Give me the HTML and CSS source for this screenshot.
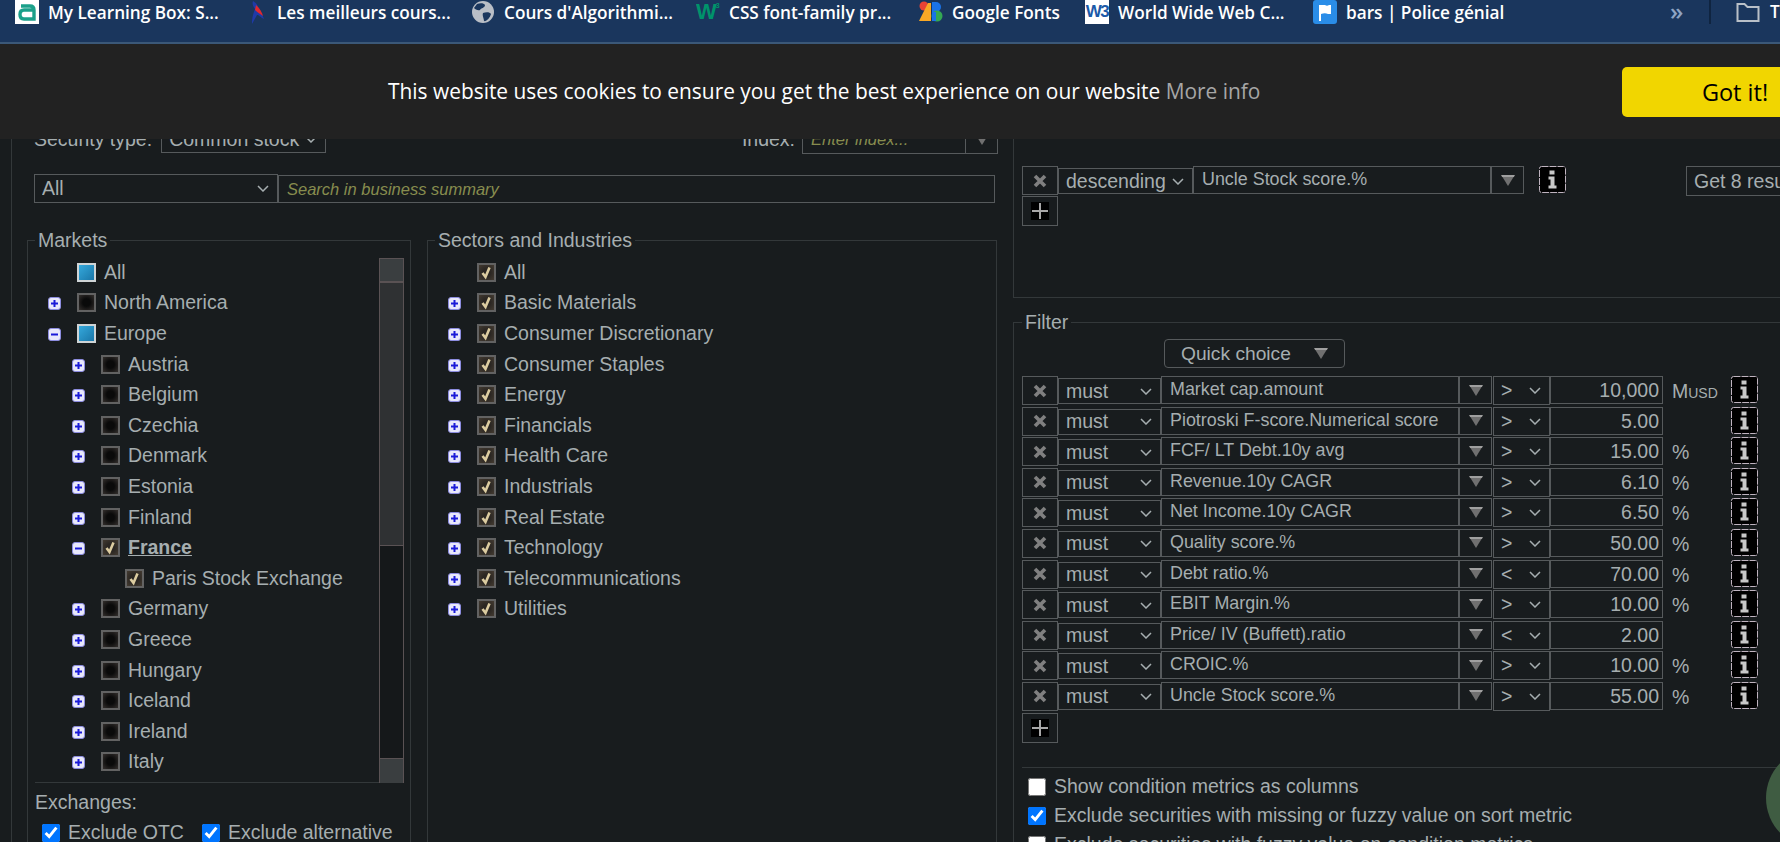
FILE: index.html
```html
<!DOCTYPE html>
<html lang="en">
<head>
<meta charset="utf-8">
<title>Uncle Stock screener</title>
<link rel="stylesheet" href="styles.css">
</head>
<body>
<svg class="sprite" aria-hidden="true">
  <symbol id="tick" viewBox="0 0 19 19"><path d="M5.500 10 L8.500 14 L12.500 4.500" fill="none" stroke="#dccca0" stroke-width="2.600"/></symbol>
  <symbol id="plus" viewBox="0 0 13 13"><rect x=".5" y=".5" width="12" height="12" rx="2.500" fill="#e8e8fb" stroke="#8c8ce0"/><path d="M3 6.500h7M6.500 3v7" stroke="#1a1ad8" stroke-width="2"/></symbol>
  <symbol id="minus" viewBox="0 0 13 13"><rect x=".5" y=".5" width="12" height="12" rx="2.500" fill="#e8e8fb" stroke="#8c8ce0"/><path d="M3 6.500h7" stroke="#1a1ad8" stroke-width="2"/></symbol>
  <symbol id="cross" viewBox="0 0 14 14"><path d="M2 2 L12 12 M12 2 L2 12" stroke="#808080" stroke-width="3.600"/></symbol>
  <symbol id="add" viewBox="0 0 18 18"><rect width="18" height="18" fill="#000"/><path d="M1 9h16M9 1v16" stroke="#a8a8a8" stroke-width="2"/></symbol>
  <symbol id="tri" viewBox="0 0 16 13"><path d="M0 0H16L8 13Z" fill="#707070"/><path d="M0 0H16L15 2.500H1Z" fill="#a0a0a0"/></symbol>
  <symbol id="info" viewBox="0 0 27 27"><rect x=".5" y=".5" width="26" height="26" rx="2" fill="#000" stroke="#bfb3bf" stroke-dasharray="7 1"/><path d="M10.500 4.500h5v4h-5zM9.500 10.500h6v9h2v3h-8v-3h2v-6h-2z" fill="#c8c8c8"/></symbol>
</svg>

<header class="bookmarks">
  <a class="bm bm-1"><svg class="bm-ico" viewBox="0 0 24 24"><rect width="24" height="24" fill="#fff"/><path d="M6 6h9q4 0 4 4v9H9q-4 0-4-4.500T9 10h10M5 14" fill="none" stroke="#1ba08a" stroke-width="3.400"/></svg><span>My Learning Box: S...</span></a>
  <a class="bm bm-2"><svg class="bm-ico" viewBox="0 0 24 24"><path d="M9 1 C14 4 15 8 15 11 C18 14 19 16 20 19 C16 17 15 15 13 15 L8 24 C8 16 10 12 11 9 C9 6 8 4 9 1Z" fill="#1f3aa8"/><path d="M12 5 C16 9 18 12 19 16 C16 14 13 12 11 10Z" fill="#e0282e"/></svg><span>Les meilleurs cours...</span></a>
  <a class="bm bm-3"><svg class="bm-ico" viewBox="0 0 24 24"><circle cx="12" cy="12" r="11" fill="#b9bec6"/><path d="M6 4 C9 3 13 3 14 5 C14 8 10 8 9 10 C7 11 4 9 3 8Z M12 13 C15 12 19 12 20 14 C19 18 15 22 13 21 C13 18 11 16 12 13Z" fill="#1a365d"/></svg><span>Cours d'Algorithmi...</span></a>
  <a class="bm bm-4"><span class="w3g">W<sup>3</sup></span><span>CSS font-family pr...</span></a>
  <a class="bm bm-5"><svg class="bm-ico" viewBox="0 0 24 24"><circle cx="5" cy="6" r="4.500" fill="#ea4335"/><path d="M0 21 L9 3 L12 3 V21Z" fill="#f9a825"/><path d="M13 2h4a5 5 0 0 1 0 10h-4z" fill="#1a73e8"/><circle cx="18" cy="16" r="5.500" fill="#34a853"/><path d="M13 12h4v9h-4z" fill="#1a73e8"/></svg><span>Google Fonts</span></a>
  <a class="bm bm-6"><span class="w3b">W3</span><span>World Wide Web C...</span></a>
  <a class="bm bm-7"><svg class="bm-ico" viewBox="0 0 24 24"><rect width="24" height="24" rx="3" fill="#2a8de8"/><path d="M7 5v16" stroke="#fff" stroke-width="2"/><path d="M8 5h4q2 1.500 4 0h2v9h-3q-3-1.500-7 0z" fill="#fff"/></svg><span>bars | Police génial</span></a>
  <span class="bm-more">»</span>
  <span class="bm-sep"></span>
  <svg class="bm-folder" viewBox="0 0 24 24"><path d="M1.500 21V4h7l3 3h11v14z" fill="none" stroke="#b9c0c8" stroke-width="2"/></svg>
  <span class="bm-t">T</span>
</header>

<div class="cookie">
  <p class="cookie-msg">This website uses cookies to ensure you get the best experience on our website <a class="cookie-more">More info</a></p>
  <button class="cookie-btn">Got it!</button>
</div>

<main class="main">
  <section class="left">
    <div class="sec-row">
      <div class="sec-group sec-type"><label>Security type:</label><select class="sel sel-sec"><option>Common stock</option></select></div>
      <div class="sec-group"><label>Index:</label><input class="inp inp-index" placeholder="Enter index..."><span class="dd dd-index"><svg class="tri"><use href="#tri"/></svg></span></div>
    </div>
    <div class="search-row">
      <select class="sel sel-all"><option>All</option></select>
      <input class="inp inp-search" placeholder="Search in business summary">
    </div>
    <div class="columns">
      <fieldset class="fs fs-markets">
        <legend>Markets</legend>
        <div class="tree-box">
          <ul class="tree">
            <li class="row l1"><span class="noexp"></span><span class="cb tri-state"></span><span>All</span></li>
            <li class="row l1"><svg class="exp"><use href="#plus"/></svg><span class="cb"></span><span>North America</span></li>
            <li class="row l1"><svg class="exp"><use href="#minus"/></svg><span class="cb tri-state"></span><span>Europe</span></li>
            <li class="row l2"><svg class="exp"><use href="#plus"/></svg><span class="cb"></span><span>Austria</span></li>
            <li class="row l2"><svg class="exp"><use href="#plus"/></svg><span class="cb"></span><span>Belgium</span></li>
            <li class="row l2"><svg class="exp"><use href="#plus"/></svg><span class="cb"></span><span>Czechia</span></li>
            <li class="row l2"><svg class="exp"><use href="#plus"/></svg><span class="cb"></span><span>Denmark</span></li>
            <li class="row l2"><svg class="exp"><use href="#plus"/></svg><span class="cb"></span><span>Estonia</span></li>
            <li class="row l2"><svg class="exp"><use href="#plus"/></svg><span class="cb"></span><span>Finland</span></li>
            <li class="row l2"><svg class="exp"><use href="#minus"/></svg><span class="cb cb-on"><svg class="tick"><use href="#tick"/></svg></span><span class="current">France</span></li>
            <li class="row l3"><span class="cb cb-on"><svg class="tick"><use href="#tick"/></svg></span><span>Paris Stock Exchange</span></li>
            <li class="row l2"><svg class="exp"><use href="#plus"/></svg><span class="cb"></span><span>Germany</span></li>
            <li class="row l2"><svg class="exp"><use href="#plus"/></svg><span class="cb"></span><span>Greece</span></li>
            <li class="row l2"><svg class="exp"><use href="#plus"/></svg><span class="cb"></span><span>Hungary</span></li>
            <li class="row l2"><svg class="exp"><use href="#plus"/></svg><span class="cb"></span><span>Iceland</span></li>
            <li class="row l2"><svg class="exp"><use href="#plus"/></svg><span class="cb"></span><span>Ireland</span></li>
            <li class="row l2"><svg class="exp"><use href="#plus"/></svg><span class="cb"></span><span>Italy</span></li>
          </ul>
          <div class="scrollbar"><span class="sb-btn"></span><span class="sb-thumb"></span><span class="sb-track"></span><span class="sb-btn sb-end"></span></div>
        </div>
        <div class="exch-title">Exchanges:</div>
        <div class="exch-row">
          <label class="chk"><input type="checkbox" checked>Exclude OTC</label>
          <label class="chk"><input type="checkbox" checked>Exclude alternative</label>
        </div>
      </fieldset>
      <fieldset class="fs fs-sectors">
        <legend>Sectors and Industries</legend>
        <ul class="tree">
          <li class="row l1"><span class="noexp"></span><span class="cb cb-on"><svg class="tick"><use href="#tick"/></svg></span><span>All</span></li>
          <li class="row l1"><svg class="exp"><use href="#plus"/></svg><span class="cb cb-on"><svg class="tick"><use href="#tick"/></svg></span><span>Basic Materials</span></li>
          <li class="row l1"><svg class="exp"><use href="#plus"/></svg><span class="cb cb-on"><svg class="tick"><use href="#tick"/></svg></span><span>Consumer Discretionary</span></li>
          <li class="row l1"><svg class="exp"><use href="#plus"/></svg><span class="cb cb-on"><svg class="tick"><use href="#tick"/></svg></span><span>Consumer Staples</span></li>
          <li class="row l1"><svg class="exp"><use href="#plus"/></svg><span class="cb cb-on"><svg class="tick"><use href="#tick"/></svg></span><span>Energy</span></li>
          <li class="row l1"><svg class="exp"><use href="#plus"/></svg><span class="cb cb-on"><svg class="tick"><use href="#tick"/></svg></span><span>Financials</span></li>
          <li class="row l1"><svg class="exp"><use href="#plus"/></svg><span class="cb cb-on"><svg class="tick"><use href="#tick"/></svg></span><span>Health Care</span></li>
          <li class="row l1"><svg class="exp"><use href="#plus"/></svg><span class="cb cb-on"><svg class="tick"><use href="#tick"/></svg></span><span>Industrials</span></li>
          <li class="row l1"><svg class="exp"><use href="#plus"/></svg><span class="cb cb-on"><svg class="tick"><use href="#tick"/></svg></span><span>Real Estate</span></li>
          <li class="row l1"><svg class="exp"><use href="#plus"/></svg><span class="cb cb-on"><svg class="tick"><use href="#tick"/></svg></span><span>Technology</span></li>
          <li class="row l1"><svg class="exp"><use href="#plus"/></svg><span class="cb cb-on"><svg class="tick"><use href="#tick"/></svg></span><span>Telecommunications</span></li>
          <li class="row l1"><svg class="exp"><use href="#plus"/></svg><span class="cb cb-on"><svg class="tick"><use href="#tick"/></svg></span><span>Utilities</span></li>
        </ul>
      </fieldset>
    </div>
  </section>

  <section class="right">
    <fieldset class="fs fs-sort">
      <div class="sort-row">
        <button class="btn-x"><svg class="x"><use href="#cross"/></svg></button>
        <select class="sel sel-desc"><option>descending</option></select>
        <div class="metric metric-sort">Uncle Stock score.%</div>
        <span class="dd"><svg class="tri"><use href="#tri"/></svg></span>
        <svg class="info info-sort"><use href="#info"/></svg>
        <button class="get">Get 8 results</button>
      </div>
      <button class="btn-x btn-add"><svg class="plus"><use href="#add"/></svg></button>
    </fieldset>
    <fieldset class="fs fs-filter">
      <legend>Filter</legend>
      <button class="quick">Quick choice<svg class="tri"><use href="#tri"/></svg></button>
      <div class="rows">
        <div class="frow"><button class="btn-x"><svg class="x"><use href="#cross"/></svg></button><select class="sel sel-must"><option>must</option></select><div class="metric">Market cap.amount</div><span class="dd"><svg class="tri"><use href="#tri"/></svg></span><select class="sel sel-cmp"><option>&gt;</option></select><div class="val">10,000</div><div class="unit">M<small>USD</small></div><svg class="info"><use href="#info"/></svg></div>
        <div class="frow"><button class="btn-x"><svg class="x"><use href="#cross"/></svg></button><select class="sel sel-must"><option>must</option></select><div class="metric">Piotroski F-score.Numerical score</div><span class="dd"><svg class="tri"><use href="#tri"/></svg></span><select class="sel sel-cmp"><option>&gt;</option></select><div class="val">5.00</div><div class="unit"></div><svg class="info"><use href="#info"/></svg></div>
        <div class="frow"><button class="btn-x"><svg class="x"><use href="#cross"/></svg></button><select class="sel sel-must"><option>must</option></select><div class="metric">FCF/ LT Debt.10y avg</div><span class="dd"><svg class="tri"><use href="#tri"/></svg></span><select class="sel sel-cmp"><option>&gt;</option></select><div class="val">15.00</div><div class="unit">%</div><svg class="info"><use href="#info"/></svg></div>
        <div class="frow"><button class="btn-x"><svg class="x"><use href="#cross"/></svg></button><select class="sel sel-must"><option>must</option></select><div class="metric">Revenue.10y CAGR</div><span class="dd"><svg class="tri"><use href="#tri"/></svg></span><select class="sel sel-cmp"><option>&gt;</option></select><div class="val">6.10</div><div class="unit">%</div><svg class="info"><use href="#info"/></svg></div>
        <div class="frow"><button class="btn-x"><svg class="x"><use href="#cross"/></svg></button><select class="sel sel-must"><option>must</option></select><div class="metric">Net Income.10y CAGR</div><span class="dd"><svg class="tri"><use href="#tri"/></svg></span><select class="sel sel-cmp"><option>&gt;</option></select><div class="val">6.50</div><div class="unit">%</div><svg class="info"><use href="#info"/></svg></div>
        <div class="frow"><button class="btn-x"><svg class="x"><use href="#cross"/></svg></button><select class="sel sel-must"><option>must</option></select><div class="metric">Quality score.%</div><span class="dd"><svg class="tri"><use href="#tri"/></svg></span><select class="sel sel-cmp"><option>&gt;</option></select><div class="val">50.00</div><div class="unit">%</div><svg class="info"><use href="#info"/></svg></div>
        <div class="frow"><button class="btn-x"><svg class="x"><use href="#cross"/></svg></button><select class="sel sel-must"><option>must</option></select><div class="metric">Debt ratio.%</div><span class="dd"><svg class="tri"><use href="#tri"/></svg></span><select class="sel sel-cmp"><option>&lt;</option></select><div class="val">70.00</div><div class="unit">%</div><svg class="info"><use href="#info"/></svg></div>
        <div class="frow"><button class="btn-x"><svg class="x"><use href="#cross"/></svg></button><select class="sel sel-must"><option>must</option></select><div class="metric">EBIT Margin.%</div><span class="dd"><svg class="tri"><use href="#tri"/></svg></span><select class="sel sel-cmp"><option>&gt;</option></select><div class="val">10.00</div><div class="unit">%</div><svg class="info"><use href="#info"/></svg></div>
        <div class="frow"><button class="btn-x"><svg class="x"><use href="#cross"/></svg></button><select class="sel sel-must"><option>must</option></select><div class="metric">Price/ IV (Buffett).ratio</div><span class="dd"><svg class="tri"><use href="#tri"/></svg></span><select class="sel sel-cmp"><option>&lt;</option></select><div class="val">2.00</div><div class="unit"></div><svg class="info"><use href="#info"/></svg></div>
        <div class="frow"><button class="btn-x"><svg class="x"><use href="#cross"/></svg></button><select class="sel sel-must"><option>must</option></select><div class="metric">CROIC.%</div><span class="dd"><svg class="tri"><use href="#tri"/></svg></span><select class="sel sel-cmp"><option>&gt;</option></select><div class="val">10.00</div><div class="unit">%</div><svg class="info"><use href="#info"/></svg></div>
        <div class="frow"><button class="btn-x"><svg class="x"><use href="#cross"/></svg></button><select class="sel sel-must"><option>must</option></select><div class="metric">Uncle Stock score.%</div><span class="dd"><svg class="tri"><use href="#tri"/></svg></span><select class="sel sel-cmp"><option>&gt;</option></select><div class="val">55.00</div><div class="unit">%</div><svg class="info"><use href="#info"/></svg></div>
      </div>
      <button class="btn-x btn-add"><svg class="plus"><use href="#add"/></svg></button>
      <hr class="sep">
      <label class="chk opt opt-first"><input type="checkbox">Show condition metrics as columns</label>
      <label class="chk opt"><input type="checkbox" checked>Exclude securities with missing or fuzzy value on sort metric</label>
      <label class="chk opt"><input type="checkbox">Exclude securities with fuzzy value on condition metrics</label>
    </fieldset>
  </section>
</main>
<div class="bubble"></div>
</body>
</html>
```

FILE: styles.css
```css
* { box-sizing: border-box; }
html, body { height: 100%; margin: 0; overflow: hidden; }
body {
  position: relative;
  background: #181c1e;
  color: #a6aeb0;
  font-family: "Liberation Sans", Arial, sans-serif;
  font-size: 19.5px;
}
.sprite { position: absolute; width: 0; height: 0; }
ul { list-style: none; margin: 0; padding: 0; }
button { font-family: inherit; }

/* bookmarks bar */
.bookmarks {
  display: flex;
  align-items: flex-start;
  height: 44px;
  padding: 0 0 0 15px;
  background: #1a365d;
  border-bottom: 2px solid #3b5878;
  color: #fff;
  font-family: "Open Sans", sans-serif;
  font-size: 17.2px;
  font-weight: 600;
  white-space: nowrap;
}
.bm { display: flex; align-items: center; gap: 9px; height: 24px; }
.bm-ico { display: block; width: 24px; height: 24px; flex: none; }
.bm-1 { width: 229px; }
.bm-2 { width: 227px; }
.bm-3 { width: 225px; }
.bm-4 { width: 223px; }
.bm-5 { width: 166px; }
.bm-6 { width: 228px; }
.bm-7 { width: 355px; }
.w3g { width: 24px; color: #00936b; font: 700 22px/24px "Liberation Sans", sans-serif; letter-spacing: -1px; flex: none; white-space: nowrap; overflow: hidden; }
.w3g sup { font-size: 7px; line-height: 0; vertical-align: 11px; }
.w3b { width: 24px; height: 24px; background: #fff; color: #1c5aa8; font: 700 17px/24px "Liberation Sans", sans-serif; text-align: center; letter-spacing: -1.5px; flex: none; }
.bm-more { width: 41px; padding-left: 2px; color: #8ea4c4; font-size: 24px; line-height: 22px; }
.bm-sep { width: 2px; height: 24px; background: #0f2440; }
.bm-folder { width: 24px; height: 24px; margin-left: 25px; }
.bm-t { margin-left: 10px; line-height: 24px; }

/* cookie banner */
.cookie {
  position: absolute;
  top: 44px;
  left: 0;
  right: 0;
  z-index: 5;
  display: flex;
  align-items: center;
  justify-content: space-between;
  height: 95px;
  padding-left: 388px;
  overflow: hidden;
  background: #222;
  font-family: "Open Sans", sans-serif;
  font-size: 20.9px;
  color: #fff;
}
.cookie-msg { margin: 0 0 2px; }
.cookie-more { color: #a6a6a6; }
.cookie-btn {
  flex: none;
  width: 226px;
  height: 50px;
  margin-right: -68px;
  border: 0;
  border-radius: 5px;
  background: #f1d600;
  color: #000;
  font-family: "Open Sans", sans-serif;
  font-size: 23.5px;
}

/* main layout */
.main { display: flex; align-items: flex-start; }
.left {
  flex: none;
  width: 1002px;
  height: 798px;
  margin-left: 11px;
  padding: 81px 15px 0 22px;
  border-left: 1px solid #33383a;
}
.right { flex: none; width: 800px; padding-top: 64px; }

.sec-row { display: flex; justify-content: space-between; height: 28px; }
.sec-group { display: flex; align-items: center; gap: 7px; }
.sec-type { gap: 9px; }
.sel {
  appearance: none;
  height: 26px;
  padding: 0 0 1px 7px;
  border: 1px solid #565a5c;
  border-radius: 0;
  background: transparent url("data:image/svg+xml,%3Csvg xmlns='http://www.w3.org/2000/svg' width='12' height='7'%3E%3Cpath d='M1 1l5 5 5-5' fill='none' stroke='%23a6aeb0' stroke-width='1.500'/%3E%3C/svg%3E") no-repeat right 8px center;
  color: #a6aeb0;
  font-family: "Liberation Sans", sans-serif;
  font-size: 19.5px;
}
.inp {
  height: 29px;
  padding: 0 8px;
  border: 1px solid #565a5c;
  background: transparent;
  color: #a6aeb0;
  font-family: "Liberation Sans", sans-serif;
  font-size: 16.5px;
  font-style: italic;
}
.inp::placeholder { color: #878c4e; opacity: 1; }
.sel-sec { width: 165px; height: 28px; }
.inp-index { width: 163px; border-right: 0; }
.dd {
  display: flex;
  align-items: center;
  justify-content: center;
  flex: none;
  width: 33px;
  height: 28px;
  border: 1px solid #565a5c;
}
.dd-index { height: 29px; margin-left: -7px; }
.tri { display: block; width: 14px; height: 11px; }

.search-row { display: flex; align-items: flex-start; height: 29px; margin-top: 21px; }
.sel-all { width: 244px; height: 29px; }
.inp-search { width: 717px; height: 28px; margin-top: 1px; }

.columns { display: flex; gap: 16px; margin: 26px 0 0 -7px; }
.fs {
  margin: 0;
  padding: 6px 7px 0;
  border: 1px solid #33383a;
  min-width: 0;
}
.fs legend { padding: 0 3px; line-height: 22px; }
.fs-markets { flex: none; width: 384px; height: 700px; padding-right: 6px; }
.fs-sectors { flex: none; width: 570px; height: 700px; }

.tree-box { display: flex; height: 526px; border-bottom: 1px solid #33383a; }
.tree { flex: 1; }
.row { display: flex; align-items: center; height: 30.6px; white-space: nowrap; }
.l1 { padding-left: 13px; }
.l2 { padding-left: 37px; }
.l3 { padding-left: 90px; }
.exp { display: block; flex: none; width: 13px; height: 13px; margin-top: 2px; margin-right: 16px; }
.noexp { flex: none; width: 29px; }
.cb {
  position: relative;
  flex: none;
  width: 19px;
  height: 19px;
  margin-right: 8px;
  border: 2px solid #626262;
  background: radial-gradient(circle, #0a0a0a 35%, #2e2a28 90%);
}
.cb-on { background: radial-gradient(circle, #2a2622 35%, #40382f 90%); }
.tri-state {
  border: 2px solid #cfd4d6;
  background: linear-gradient(135deg, #35a9dc, #1a76a8);
}
.tick { position: absolute; inset: -2px; width: 19px; height: 19px; }
.current { font-weight: 700; text-decoration: underline; }

.scrollbar { display: flex; flex-direction: column; flex: none; width: 25px; height: 525px; margin-top: 1px; border: 1px solid #5a5254; border-width: 0 1px; }
.sb-btn { flex: none; height: 25px; background: #3a3e40; border-top: 1px solid #5a5254; border-bottom: 2px solid #5a5254; }
.sb-thumb { flex: none; height: 262px; background: #2f3133; }
.sb-track { flex: 1; background: #15181a; border-top: 1px solid #5a5254; }
.sb-end { border-bottom: 0; border-top: 1px solid #5a5254; }

.exch-title { margin-top: 8px; line-height: 22px; }
.exch-row { display: flex; gap: 18px; margin: 8px 0 0 7px; }
.chk { display: flex; align-items: center; gap: 8px; white-space: nowrap; }
.chk input { flex: none; width: 18px; height: 18px; margin: 0; }

/* right column */
.fs-sort { height: 190px; padding: 0 0 0 8px; }
.sort-row { display: flex; align-items: flex-start; height: 30px; margin-top: 57px; }
.btn-x {
  display: flex;
  align-items: center;
  justify-content: center;
  flex: none;
  width: 36px;
  height: 29px;
  padding: 0;
  border: 1px solid #565a5c;
  background: transparent;
}
.x { display: block; width: 14px; height: 14px; }
.sel-desc { flex: none; width: 135px; height: 26px; margin-top: 2px; }
.metric {
  flex: none;
  width: 298px;
  height: 28px;
  padding-left: 8px;
  border: 1px solid #565a5c;
  font-size: 17.9px;
  line-height: 24px;
  white-space: nowrap;
}
.info { display: block; flex: none; width: 27px; height: 27px; }
.info-sort { margin-left: 15px; }
.get {
  flex: none;
  width: 200px;
  height: 30px;
  margin-left: 120px;
  padding: 0 0 0 7px;
  border: 1px solid #565a5c;
  background: transparent;
  color: #a6aeb0;
  font-size: 19.5px;
  text-align: left;
  white-space: nowrap;
}
.plus { display: block; width: 18px; height: 18px; }
.btn-add { height: 30px; }

.fs-filter { margin-top: 13px; padding: 6px 0 0 8px; height: 560px; }
.quick {
  display: flex;
  align-items: center;
  justify-content: space-between;
  width: 181px;
  height: 29px;
  margin-left: 142px;
  padding: 0 16px 0 16px;
  border: 1px solid #565a5c;
  border-radius: 4px;
  background: transparent;
  color: #a6aeb0;
  font-size: 19.2px;
}
.rows { margin-top: 8px; }
.frow { display: flex; align-items: flex-start; height: 30.6px; }
.sel-must { flex: none; width: 103px; height: 26px; margin-top: 2px; }
.sel-cmp { flex: none; width: 57px; height: 29px; margin-left: 1px; }
.val { flex: none; width: 113px; height: 28px; padding-right: 3px; border: 1px solid #565a5c; line-height: 26px; text-align: right; }
.unit { flex: none; width: 68px; padding-left: 9px; line-height: 30px; }
.unit small { font-size: 14px; }
.sep { margin: 24px 0 0; border: 0; border-top: 1px solid #33383a; }
.opt { height: 28.8px; margin-left: 6px; }
.opt-first { margin-top: 5px; }
.bubble {
  position: absolute;
  left: 1766px;
  top: 748px;
  width: 100px;
  height: 100px;
  border-radius: 50%;
  background: #3f5c42;
}
```
